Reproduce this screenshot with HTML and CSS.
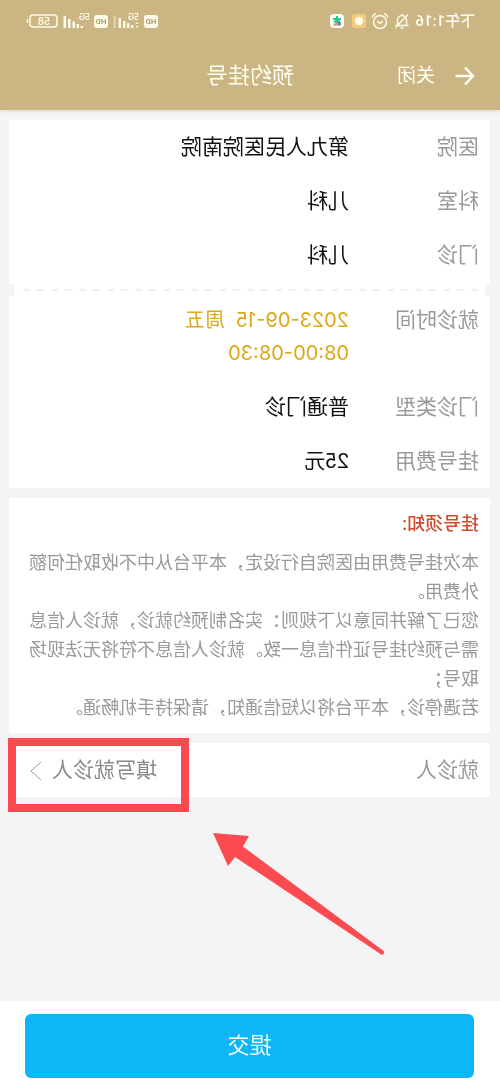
FILE: index.html
```html
<!DOCTYPE html>
<html lang="zh-CN">
<head>
<meta charset="utf-8">
<meta name="viewport" content="width=device-width, initial-scale=1">
<title>预约挂号</title>
<link rel="stylesheet" href="styles.css">
</head>
<body>
<div class="page">
  <header class="header">
    <div class="status">
      <div class="status-group">
        <span class="clock">下午1:16</span>
        <svg class="icon" width="16" height="18" viewBox="0 0 16 18" fill="none" stroke="#fffbe8" stroke-width="1.5">
          <path d="M3.5 13V8a4.5 4.500 0 0 1 9 0v5M1.500 13.500h13M6.500 16h3M8 3.500V2M2 2.500l12.500 13"/>
        </svg>
        <svg class="icon" width="18" height="18" viewBox="0 0 18 18" fill="none" stroke="#fffbe8" stroke-width="1.500">
          <circle cx="9" cy="10" r="6.500"/><path d="M6.500 9l2.500 2.500L12 9M1.200 5.200C1.800 3.500 3 2.300 4.800 1.500M16.800 5.200C16.200 3.500 15 2.300 13.200 1.500"/>
        </svg>
        <svg class="icon" width="14" height="14" viewBox="0 0 14 14">
          <rect width="14" height="14" rx="3" fill="#f8cb7c"/><circle cx="7" cy="7" r="4.200" fill="#fffdf0"/>
        </svg>
        <svg class="icon app-icon" width="14" height="14" viewBox="0 0 14 14">
          <rect width="14" height="14" rx="4" fill="#fffdf4"/><path d="M6 2h2v2h3v2H9l2 2.500H3L5 6H3V4h3z" fill="#22c9a2"/><path d="M7.500 7.500L11 11.500H6z" fill="#f07f68"/><path d="M3.500 8H7l-1 3.500H3z" fill="#4d8f9d"/>
        </svg>
      </div>
      <div class="status-group status-right">
        <span class="hd">HD</span>
        <svg class="icon" width="28" height="18" viewBox="0 0 28 18" fill="#fffbe8">
          <text class="net" x="1" y="8">5G</text>
          <path d="M3 10l1.500 2H1.500zM3 16l1.500-2H1.500zM6.500 13H9v3H6.500zM10.500 11H13v5h-2.500zM14.500 9H17v7h-2.500zM19 6h2.500v10H19z"/>
          <path d="M24 4h2.500v12H24z" opacity=".4"/>
        </svg>
        <span class="hd">HD</span>
        <svg class="icon" width="28" height="18" viewBox="0 0 28 18" fill="#fffbe8">
          <text class="net" x="0" y="8">5G</text>
          <path d="M7 14h2.500v2H7zM11 12h2.500v4H11zM15 9.500h2.500V16H15zM19.500 7H22v9h-2.500zM24 4h2.500v12H24z"/>
        </svg>
        <svg class="icon" width="32" height="14" viewBox="0 0 32 14" fill="none" stroke="#fffbe8" stroke-width="1.500">
          <rect x="1" y="1" width="27" height="12" rx="3"/><path d="M30.500 5v4"/>
          <text class="charge" x="14" y="11" text-anchor="middle" stroke="none" fill="#fffbe8">58</text>
        </svg>
      </div>
    </div>
    <nav class="nav">
      <div class="nav-actions">
        <button class="back" type="button" aria-label="返回">
          <svg class="icon" width="20" height="20" viewBox="0 0 20 20" fill="none" stroke="#fffdf2" stroke-width="2.500"><path d="M19.500 10H2M10 1.500L2 10l8 8.500"/></svg>
        </button>
        <button class="close" type="button">关闭</button>
      </div>
      <h1 class="title">预约挂号</h1>
    </nav>
  </header>

  <main class="main">
    <section class="card">
      <dl class="rows">
        <div class="row"><dt>医院</dt><dd>第九人民医院南院</dd></div>
        <div class="row"><dt>科室</dt><dd>儿科</dd></div>
        <div class="row"><dt>门诊</dt><dd>儿科</dd></div>
      </dl>
      <div class="divider"></div>
      <dl class="rows">
        <div class="row"><dt>就诊时间</dt><dd class="time">2023-09-15&nbsp; 周五<br>08:00-08:30</dd></div>
        <div class="row"><dt>门诊类型</dt><dd>普通门诊</dd></div>
        <div class="row"><dt>挂号费用</dt><dd>25元</dd></div>
      </dl>
    </section>

    <section class="card notice">
      <h2 class="notice-title">挂号须知:</h2>
      <p>本次挂号费用由医院自行设定，本平台从中不收取任何额外费用。</p>
      <p>您已了解并同意以下规则：实名制预约就诊，就诊人信息需与预约挂号证件信息一致。就诊人信息不符将无法现场取号；</p>
      <p>若遇停诊，本平台将以短信通知，请保持手机畅通。</p>
    </section>

    <section class="card patient">
      <span class="patient-label">就诊人</span>
      <button class="patient-pick" type="button">填写就诊人
        <svg class="icon" width="12" height="20" viewBox="0 0 12 20" fill="none" stroke="#999" stroke-width="1"><path d="M1 1l10 9-10 9"/></svg>
      </button>
      <div class="highlight"></div>
      <svg class="pointer" width="174" height="124" viewBox="0 0 174 124" fill="#fb4b50"><path d="M173 1L137 4l6 10.500L3 118.500Q0 121 4 123L151 25l7 9z"/></svg>
    </section>
  </main>

  <footer class="footer">
    <button class="submit" type="button">提交</button>
  </footer>
</div>
</body>
</html>
```

FILE: styles.css
```css
* {
  box-sizing: border-box;
}

body {
  margin: 0;
  background: #f4f4f4;
  font-family: Roboto, "Noto Sans CJK SC", sans-serif;
}

button {
  padding: 0;
  border: 0;
  background: none;
  color: inherit;
  font: inherit;
}

h1, h2, p, dl, dd {
  margin: 0;
}

.icon {
  display: block;
  flex: none;
}

/* The whole screen is shown flipped, as in a mirror */
.page {
  display: flex;
  flex-direction: column;
  min-height: 100vh;
  transform: scaleX(-1);
}

.header {
  background: #cbb582;
  color: #fffdf2;
  box-shadow: 0 1px 3px #d8d2c0;
}

.status {
  display: flex;
  justify-content: space-between;
  align-items: center;
  height: 42px;
  padding: 0 26px 0 25px;
}

.status-group {
  display: flex;
  align-items: center;
  gap: 5px;
}

.status-right {
  gap: 4px;
}

.app-icon {
  margin-left: 3px;
}

.clock {
  font-size: 15px;
  font-weight: 500;
  line-height: 20px;
}

.hd {
  width: 14px;
  border-radius: 3px;
  background: #fffbe8;
  color: #b59f6c;
  font-size: 8px;
  font-weight: 700;
  line-height: 13px;
  text-align: center;
}

.net {
  font-size: 9px;
  font-weight: 500;
}

.charge {
  font-size: 11px;
  font-weight: 500;
}

.nav {
  display: grid;
  grid-template-columns: 1fr auto 1fr;
  align-items: center;
  height: 68px;
  padding: 0 25px;
}

.nav-actions {
  display: flex;
  align-items: center;
  gap: 20px;
}

.close {
  font-size: 19px;
  line-height: 28px;
}

.title {
  font-size: 22px;
  font-weight: 400;
  line-height: 32px;
}

.main {
  display: flex;
  flex: 1;
  flex-direction: column;
  gap: 10px;
  padding: 10px 9px 10px 10px;
}

.card {
  background: #fff;
}

.row {
  display: grid;
  grid-template-columns: 130px 1fr;
  padding: 11px 11px 10px;
  font-size: 21px;
  line-height: 33px;
}

.row dt {
  color: #999;
}

.row dd {
  color: #111;
}

.row .time {
  color: #dba91c;
  font-family: Inter, "Noto Sans CJK SC", sans-serif;
  font-size: 20px;
}

.divider {
  position: relative;
  height: 11px;
  padding: 7px 12px 0;
  background: repeating-linear-gradient(90deg, #efefef 0 7px, #fff 7px 14px) content-box no-repeat 0 0 / 100% 2px;
}

.divider::before,
.divider::after {
  content: "";
  position: absolute;
  top: 2px;
  width: 5px;
  height: 12px;
  background: #f4f4f4;
}

.divider::before {
  left: 0;
}

.divider::after {
  right: 0;
}

.notice {
  padding: 11px;
  color: #999;
  font-size: 18px;
  line-height: 29px;
}

.notice-title {
  margin-bottom: 10px;
  color: #cf4b2b;
  font-size: 18px;
  font-weight: 500;
}

.patient {
  position: relative;
  display: flex;
  align-items: center;
  justify-content: space-between;
  padding: 11px 21px 10px 11px;
  color: #999;
  font-size: 21px;
  line-height: 33px;
}

.patient-pick {
  display: flex;
  align-items: center;
  gap: 10px;
  color: #888;
}

.highlight {
  position: absolute;
  top: -5px;
  right: -1px;
  width: 181px;
  height: 74px;
  border: 8px solid #fb4b50;
  pointer-events: none;
}

.pointer {
  position: absolute;
  top: 89px;
  right: 203px;
  pointer-events: none;
}

.footer {
  padding: 13px 25px 13px 26px;
  background: #fff;
}

.submit {
  display: block;
  width: 100%;
  padding: 16px 0;
  border-radius: 6px;
  background: #0db6f7;
  color: #f2fcff;
  font-size: 22px;
  line-height: 32px;
}
```
